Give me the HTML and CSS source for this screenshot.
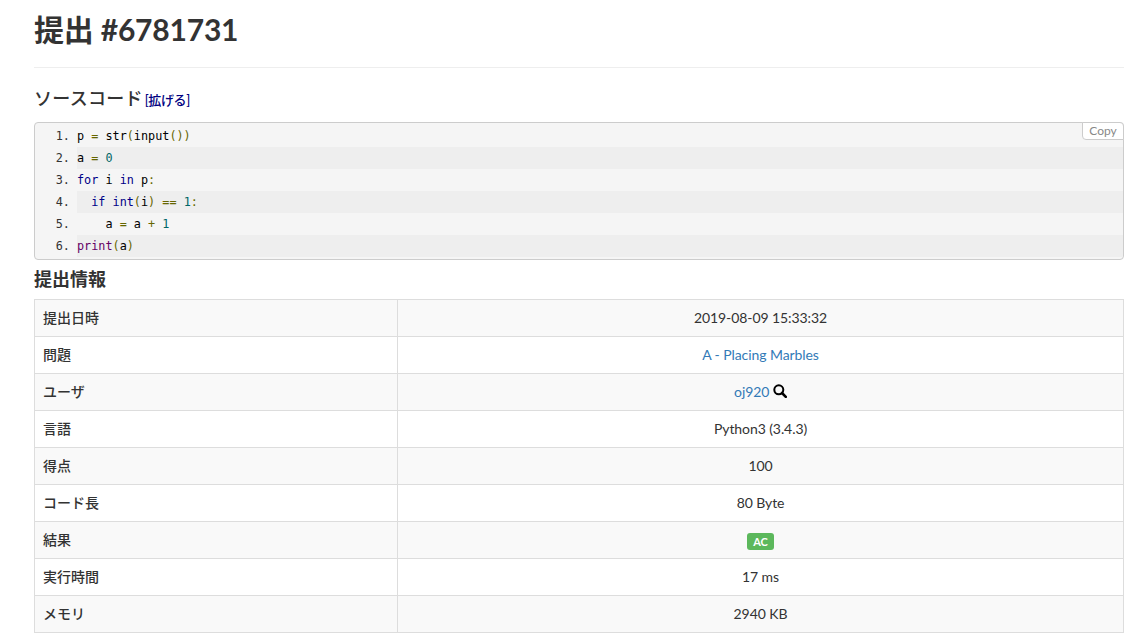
FILE: index.html
```html
<!DOCTYPE html>
<html lang="ja">
<head>
<meta charset="utf-8">
<title>提出 #6781731</title>
<link rel="stylesheet" href="styles.css">
</head>
<body>
<main class="page">
  <header class="page-header"><h1>提出 #6781731</h1></header>
  <h2 class="section-title first">ソースコード <a class="expand" href="#">[拡げる]</a></h2>
  <div class="code-box">
    <button class="copy" type="button">Copy</button>
    <ol class="code">
      <li><span class="pln">p </span><span class="pun">=</span><span class="pln"> str</span><span class="pun">(</span><span class="pln">input</span><span class="pun">())</span></li>
      <li><span class="pln">a </span><span class="pun">=</span><span class="pln"> </span><span class="lit">0</span></li>
      <li><span class="kwd">for</span><span class="pln"> i </span><span class="kwd">in</span><span class="pln"> p</span><span class="pun">:</span></li>
      <li><span class="pln">  </span><span class="kwd">if</span><span class="pln"> </span><span class="kwd">int</span><span class="pun">(</span><span class="pln">i</span><span class="pun">)</span><span class="pln"> </span><span class="pun">==</span><span class="pln"> </span><span class="lit">1</span><span class="pun">:</span></li>
      <li><span class="pln">    a </span><span class="pun">=</span><span class="pln"> a </span><span class="pun">+</span><span class="pln"> </span><span class="lit">1</span></li>
      <li><span class="typ">print</span><span class="pun">(</span><span class="pln">a</span><span class="pun">)</span></li>
    </ol>
  </div>
  <h2 class="section-title">提出情報</h2>
  <table class="info">
    <tbody>
      <tr><th>提出日時</th><td>2019-08-09 15:33:32</td></tr>
      <tr><th>問題</th><td><a href="#">A - Placing Marbles</a></td></tr>
      <tr><th>ユーザ</th><td><a href="#">oj920</a> <svg class="search" viewBox="0 0 14 14" width="14" height="14" aria-hidden="true"><circle cx="5.8" cy="5.8" r="4.5" fill="none" stroke="#000" stroke-width="2"/><path d="M9 9 L12.8 12.8" stroke="#000" stroke-width="2.6" stroke-linecap="round"/></svg></td></tr>
      <tr><th>言語</th><td>Python3 (3.4.3)</td></tr>
      <tr><th>得点</th><td>100</td></tr>
      <tr><th>コード長</th><td>80 Byte</td></tr>
      <tr><th>結果</th><td><span class="label-ac">AC</span></td></tr>
      <tr><th>実行時間</th><td>17 ms</td></tr>
      <tr><th>メモリ</th><td>2940 KB</td></tr>
    </tbody>
  </table>
</main>
</body>
</html>
```
FILE: styles.css
```css
* { box-sizing: border-box; }
html, body { margin: 0; padding: 0; background: #fff; }
body {
  font-family: Lato, "Noto Sans CJK JP", sans-serif;
  font-size: 14px;
  line-height: 20px;
  color: #333;
  overflow: hidden;
}
.page { width: 1090px; margin-left: 34px; }
.page-header {
  height: 68px;
  padding-top: 9px;
  border-bottom: 1px solid #eee;
}
h1 {
  margin: 0;
  font-size: 30px;
  line-height: 40px;
  font-weight: 700;
  letter-spacing: -0.2px;
}
.section-title {
  margin: 0;
  font-size: 18px;
  line-height: 20px;
  font-weight: 700;
  height: 30px;
}
.section-title.first { margin-top: 20px; height: 34px; font-weight: 500; letter-spacing: 0.3px; }
.expand {
  font-size: 13px;
  font-weight: 500;
  letter-spacing: -0.4px;
  margin-left: -3px;
  color: #000080;
  text-decoration: none;
}
.code-box {
  position: relative;
  height: 138px;
  margin-bottom: 9px;
  border: 1px solid #ccc;
  border-radius: 4px;
  background: #f5f5f5;
  padding: 2px 0;
}
.copy {
  position: absolute;
  top: -1px;
  right: -1px;
  width: 42px;
  height: 18px;
  padding: 0;
  border: 1px solid #ccc;
  border-radius: 0 4px 0 4px;
  background: #fff;
  color: #888;
  font-family: Lato, sans-serif;
  font-size: 12px;
  line-height: 16px;
}
.code {
  margin: 0;
  padding: 0 0 0 42px;
  font-family: "DejaVu Sans Mono", monospace;
  font-size: 11.8px;
  line-height: 23px;
  color: #333;
}
.code li { white-space: pre; height: 22px; background: #f5f5f5; }
.code li:nth-child(even) { background: #eee; }
.pln { color: #000; }
.pun { color: #660; }
.kwd { color: #008; }
.lit { color: #066; }
.typ { color: #606; }
.info {
  width: 100%;
  border-collapse: collapse;
  table-layout: fixed;
  border: 1px solid #ddd;
}
.info th, .info td {
  height: 37px;
  padding: 0 8px;
  border: 1px solid #ddd;
  font-weight: 400;
  vertical-align: middle;
}
.info th {
  width: 363px;
  text-align: left;
  font-weight: 500;
}
.info td { text-align: center; letter-spacing: -0.08px; }
.info tr:nth-child(odd) { background: #f9f9f9; }
.info a { color: #337ab7; text-decoration: none; }
.search { vertical-align: -1px; }
.label-ac {
  display: inline-block;
  padding: 0 6px;
  height: 17px;
  line-height: 17px;
  vertical-align: -1px;
  background: #5cb85c;
  color: #fff;
  border-radius: 3px;
  font-size: 11px;
  font-weight: 700;
}
```
